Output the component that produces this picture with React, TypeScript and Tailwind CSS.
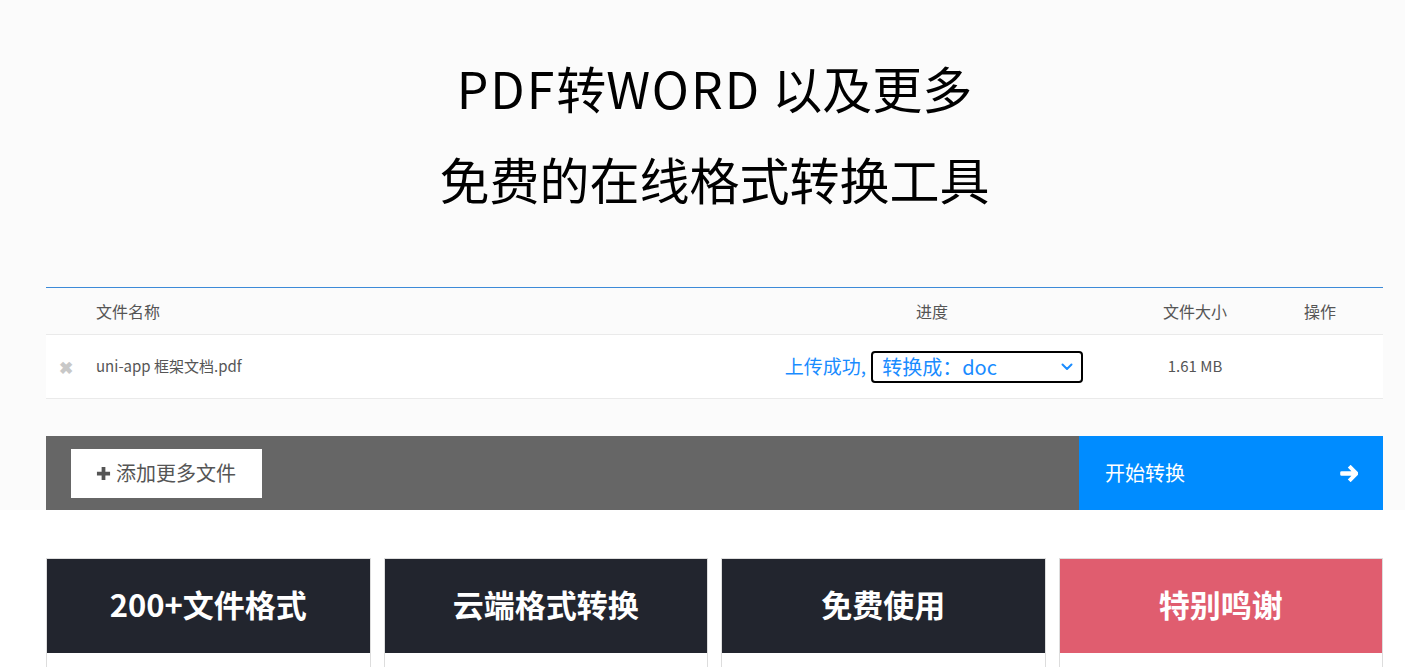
import React from 'react';

const font = { fontFamily: '"Noto Sans CJK SC", "Noto Sans", sans-serif' };

function PlusIcon() {
  return (
    <svg width="15" height="15" viewBox="0 0 16 16" className="fill-[#555]">
      <path d="M6 1h4v5h5v4h-5v5H6v-5H1V6h5z" />
    </svg>
  );
}

function ArrowIcon() {
  return (
    <svg width="18" height="17" viewBox="0 0 18 17" className="fill-white">
      <path d="M9.2 1.2 L10.6 -0.2 L18 7.2 Q18.8 8.5 18 9.8 L10.6 17.2 L9.2 15.8 L7.8 14.4 L11.4 10.8 H1.6 Q0.2 10.8 0.2 9.4 V7.6 Q0.2 6.2 1.6 6.2 H11.4 L7.8 2.6 Z" />
    </svg>
  );
}

function Chevron() {
  return (
    <svg width="12" height="8" viewBox="0 0 12 8" fill="none" className="stroke-[#1a8cff]">
      <path d="M1.5 1.5 L6 6 L10.5 1.5" strokeWidth="2" strokeLinecap="round" strokeLinejoin="round" />
    </svg>
  );
}

const features = [
  { title: '200+文件格式', bg: 'bg-[#22252e]' },
  { title: '云端格式转换', bg: 'bg-[#22252e]' },
  { title: '免费使用', bg: 'bg-[#22252e]' },
  { title: '特别鸣谢', bg: 'bg-[#e05d6f]' },
];

export default function App() {
  return (
    <div className="min-h-[667px] bg-white" style={font}>
      <section className="bg-[#fbfbfb]">
        <div className="ml-[46px] w-[1337px]">
          <div className="flex flex-col items-center pt-[54px] text-black">
            <h1 className="text-[50px] leading-[66px] font-normal">
              <span className="tracking-[2px]">PDF</span>转<span className="tracking-[2px]">WORD</span> 以及更多
            </h1>
            <h2 className="mt-[25px] text-[50px] leading-[66px] font-normal">免费的在线格式转换工具</h2>
          </div>

          <div className="mt-[76px] border-t border-[#3c8ad8]">
            <div className="grid h-[47px] grid-cols-[40px_674px_344px_182px_68px_1fr] items-center border-b border-[#eaeaea] text-[16px] text-[#555]">
              <div />
              <div className="pl-[10px]">文件名称</div>
              <div className="text-center">进度</div>
              <div className="text-center">文件大小</div>
              <div className="text-center">操作</div>
              <div />
            </div>
            <div className="grid h-[64px] grid-cols-[40px_674px_344px_182px_68px_1fr] items-center border-b border-[#eaeaea] bg-white text-[15px] text-[#555]">
              <div className="flex justify-center text-[17px] leading-none font-bold text-[#c8c8c8]">✖</div>
              <div className="pl-[10px]">uni-app 框架文档.pdf</div>
              <div className="flex items-center justify-center pl-[4px] text-[19px] text-[#1a8cff]">
                <span>上传成功,</span>
                <div className="ml-[5px] flex h-[32px] w-[212px] items-center justify-between rounded-[4px] border-2 border-black bg-white pr-[8px] pl-[9px]">
                  <span className="text-[20px]">转换成：doc</span>
                  <Chevron />
                </div>
              </div>
              <div className="text-center">1.61 MB</div>
              <div />
              <div />
            </div>
          </div>

          <div className="mt-[37px] flex h-[74px]">
            <div className="flex flex-1 items-center bg-[#666] pl-[25px]">
              <button className="flex h-[49px] w-[191px] items-center gap-[5px] bg-white pl-[25px] text-[20px] text-[#555]">
                <PlusIcon />
                <span>添加更多文件</span>
              </button>
            </div>
            <div className="flex w-[304px] items-center justify-between bg-[#008cff] pr-[25px] pl-[26px] text-[20px] text-white">
              <span>开始转换</span>
              <ArrowIcon />
            </div>
          </div>
        </div>
      </section>

      <div className="ml-[46px] mt-[48px] grid w-[1337px] grid-cols-4 gap-[13px]">
        {features.map((f) => (
          <div key={f.title} className="h-[120px] border border-[#dddddd] bg-white">
            <div className={`flex h-[94px] items-center justify-center pb-[3px] ${f.bg} text-[31px] font-bold text-white`}>
              {f.title}
            </div>
          </div>
        ))}
      </div>
    </div>
  );
}
